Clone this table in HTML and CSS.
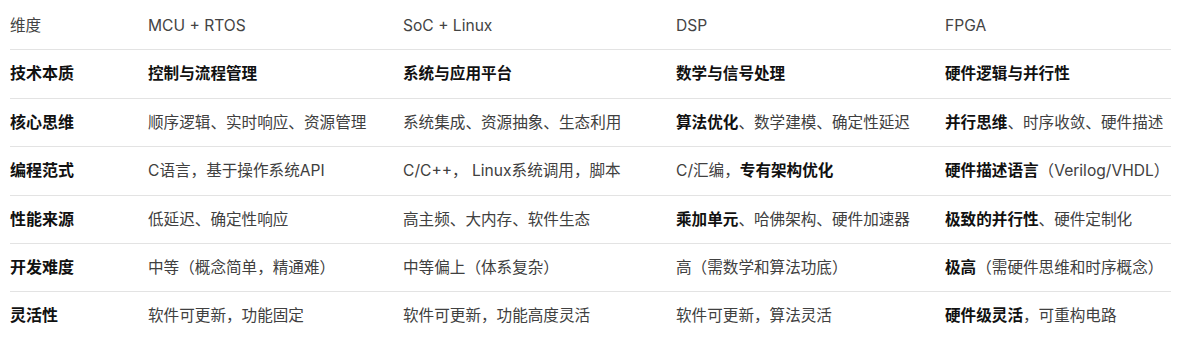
FILE: index.html
```html
<!DOCTYPE html>
<html lang="zh-CN">
<head>
<meta charset="utf-8">
<title>对比</title>
<link rel="stylesheet" href="styles.css">
</head>
<body>
<table class="cmp">
  <colgroup>
    <col class="c1"><col class="c2"><col class="c3"><col class="c4"><col class="c5">
  </colgroup>
  <thead>
    <tr><th class="c1">维度</th><th class="c2">MCU + RTOS</th><th class="c3">SoC + Linux</th><th class="c4">DSP</th><th class="c5">FPGA</th></tr>
  </thead>
  <tbody>
    <tr><td class="k">技术本质</td><td><b>控制与流程管理</b></td><td><b>系统与应用平台</b></td><td><b>数学与信号处理</b></td><td><b>硬件逻辑与并行性</b></td></tr>
    <tr><td class="k">核心思维</td><td>顺序逻辑、实时响应、资源管理</td><td>系统集成、资源抽象、生态利用</td><td><b>算法优化</b>、数学建模、确定性延迟</td><td><b>并行思维</b>、时序收敛、硬件描述</td></tr>
    <tr><td class="k">编程范式</td><td>C语言，基于操作系统API</td><td>C/C++， Linux系统调用，脚本</td><td>C/汇编，<b>专有架构优化</b></td><td><b>硬件描述语言</b>（Verilog/VHDL）</td></tr>
    <tr><td class="k">性能来源</td><td>低延迟、确定性响应</td><td>高主频、大内存、软件生态</td><td><b>乘加单元</b>、哈佛架构、硬件加速器</td><td><b>极致的并行性</b>、硬件定制化</td></tr>
    <tr><td class="k">开发难度</td><td>中等（概念简单，精通难）</td><td>中等偏上（体系复杂）</td><td>高（需数学和算法功底）</td><td><b>极高</b>（需硬件思维和时序概念）</td></tr>
    <tr><td class="k">灵活性</td><td>软件可更新，功能固定</td><td>软件可更新，功能高度灵活</td><td>软件可更新，算法灵活</td><td><b>硬件级灵活</b>，可重构电路</td></tr>
  </tbody>
</table>
</body>
</html>
```

FILE: styles.css
```css
html, body {
  margin: 0;
  padding: 0;
  background: #ffffff;
}
body {
  padding: 2px 0 0 10px;
  font-family: "Inter", "Noto Sans CJK SC", sans-serif;
  font-size: 15.6px;
  color: #404040;
}
.cmp {
  width: 1161px;
  table-layout: fixed;
  border-collapse: collapse;
}
.c1 { width: 138px; }
.c2 { width: 255px; }
.c3 { width: 273px; }
.c4 { width: 269px; }
.c5 { width: 226px; }
.cmp th,
.cmp td {
  text-align: left;
  padding: 12px 0;
  line-height: 23.4px;
  white-space: nowrap;
  vertical-align: middle;
}
.cmp th {
  font-weight: 400;
  color: #444444;
}
.cmp tbody tr td {
  border-top: 1px solid #e3e3e3;
}
.cmp .k {
  font-weight: 600;
  font-size: 16px;
  color: #111111;
}
.cmp b {
  font-weight: 600;
  color: #111111;
}
```
